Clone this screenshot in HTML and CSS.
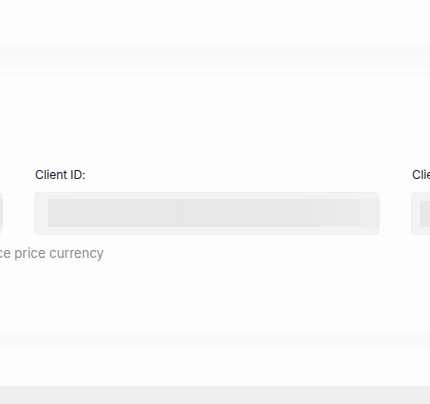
FILE: index.html
```html
<!DOCTYPE html>
<html>
<head>
<meta charset="utf-8">
<link rel="stylesheet" href="styles.css">
</head>
<body>
<div class="page">
  <div class="band top"></div>
  <div class="line l1"></div>
  <div class="line l2"></div>
  <section class="form">
    <div class="row">
      <div class="field">
        <label class="label">Client Secret:</label>
        <div class="input"><div class="skeleton"></div></div>
      </div>
      <div class="field">
        <label class="label">Client ID:</label>
        <div class="input"><div class="skeleton fade"></div></div>
      </div>
      <div class="field">
        <label class="label">Client Key:</label>
        <div class="input"><div class="skeleton short"></div></div>
      </div>
    </div>
    <p class="hint">Reference price currency</p>
  </section>
  <div class="band mid"></div>
  <div class="band bottom"></div>
</div>
</body>
</html>
```
FILE: styles.css
```css
html, body {
  margin: 0;
  padding: 0;
  background: #fdfdfd;
  font-family: Inter, "Noto Sans", sans-serif;
  overflow: hidden;
}
.page {
  width: 430px;
  height: 404px;
  display: flex;
  flex-direction: column;
  padding-top: 44px;
  box-sizing: border-box;
}
.band {
  width: 100%;
  flex: none;
}
.band.top {
  height: 17px;
  background: #fafafa;
}
.line {
  background: #fafafa;
  flex: none;
}
.line.l1 { margin-top: 2px; height: 4px; }
.line.l2 { margin-top: 6px; height: 3px; }
.form {
  padding-top: 91px;
  height: 254px;
  box-sizing: border-box;
  flex: none;
}
.row {
  display: flex;
  gap: 32px;
  margin-left: -343px;
}
.field {
  width: 345px;
  flex: none;
  display: flex;
  flex-direction: column;
}
.label {
  font-size: 12px;
  color: #1c2333;
  line-height: 16px;
  height: 16px;
  margin-left: 1px;
  letter-spacing: -0.1px;
}
.input {
  margin-top: 9px;
  height: 43px;
  box-sizing: border-box;
  background: #f3f3f3;
  border: 1px solid #efefef;
  border-radius: 4px;
  padding: 6px 0 7px 13px;
}
.skeleton {
  height: 28px;
  width: 332px;
  background: #e8e8e8;
}
.skeleton.fade {
  background: linear-gradient(90deg, #e9e9e9 0%, #e7e7e7 40%, #e8e8e8 75%, #ececec 90%, #efefef 100%);
}
.skeleton.short {
  margin-left: -5px;
  margin-top: 2px;
  height: 26px;
}
.hint {
  margin: 10px 0 0 0;
  font-size: 13px;
  color: #8c8c8c;
  line-height: 16px;
  text-indent: -52px;
  white-space: nowrap;
}
.band.mid {
  height: 17px;
  background: #fafafa;
}
.band.bottom {
  margin-top: 39px;
  height: 18px;
  background: #efefef;
}
```
